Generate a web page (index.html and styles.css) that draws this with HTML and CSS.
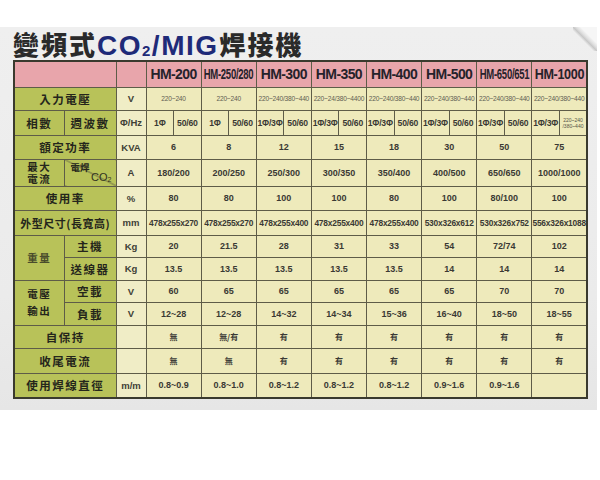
FILE: index.html
```html
<!DOCTYPE html>
<html lang="zh-Hant">
<head>
<meta charset="utf-8">
<title>變頻式CO2/MIG焊接機</title>
<link rel="stylesheet" href="styles.css">
</head>
<body>
<div class="paper">
  <h1 class="title"><span class="zh">變頻式</span><span class="en">CO<sub>2</sub>/MIG</span><span class="zh">焊接機</span></h1>
  <table class="spec">
    <colgroup>
      <col class="c-l1"><col class="c-l2"><col class="c-u">
      <col><col><col><col><col><col><col><col>
      <col><col><col><col><col><col><col><col>
    </colgroup>
    <tr class="h26">
      <th class="pink" colspan="2"></th>
      <th class="pink"></th>
      <th class="pink model" colspan="2">HM-200</th>
      <th class="pink model" colspan="2"><span class="cond">HM-250/280</span></th>
      <th class="pink model" colspan="2">HM-300</th>
      <th class="pink model" colspan="2">HM-350</th>
      <th class="pink model" colspan="2">HM-400</th>
      <th class="pink model" colspan="2">HM-500</th>
      <th class="pink model" colspan="2"><span class="cond">HM-650/651</span></th>
      <th class="pink model" colspan="2"><span class="cond2">HM-1000</span></th>
    </tr>
    <tr class="h23">
      <td class="lab" colspan="2">入力電壓</td>
      <td class="unit">V</td>
      <td class="val sm" colspan="2">220~240</td>
      <td class="val sm" colspan="2">220~240</td>
      <td class="val sm" colspan="2">220~240/380~440</td>
      <td class="val sm" colspan="2">220~24/380~4400</td>
      <td class="val sm" colspan="2">220~240/380~440</td>
      <td class="val sm" colspan="2">220~240/380~440</td>
      <td class="val sm" colspan="2">220~240/380~440</td>
      <td class="val sm" colspan="2">220~240/380~440</td>
    </tr>
    <tr class="h25">
      <td class="lab">相數</td>
      <td class="lab">週波數</td>
      <td class="unit">Φ/Hz</td>
      <td class="val ph">1Φ</td><td class="val ph">50/60</td>
      <td class="val ph">1Φ</td><td class="val ph">50/60</td>
      <td class="val ph">1Φ/3Φ</td><td class="val ph">50/60</td>
      <td class="val ph">1Φ/3Φ</td><td class="val ph">50/60</td>
      <td class="val ph">1Φ/3Φ</td><td class="val ph">50/60</td>
      <td class="val ph">1Φ/3Φ</td><td class="val ph">50/60</td>
      <td class="val ph">1Φ/3Φ</td><td class="val ph">50/60</td>
      <td class="val ph">1Φ/3Φ</td><td class="val tiny">220~240<br>/380~440</td>
    </tr>
    <tr class="h24">
      <td class="lab" colspan="2">額定功率</td>
      <td class="unit">KVA</td>
      <td class="val" colspan="2">6</td>
      <td class="val" colspan="2">8</td>
      <td class="val" colspan="2">12</td>
      <td class="val" colspan="2">15</td>
      <td class="val" colspan="2">18</td>
      <td class="val" colspan="2">30</td>
      <td class="val" colspan="2">50</td>
      <td class="val" colspan="2">75</td>
    </tr>
    <tr class="h25">
      <td class="lab two">最大<br>電流</td>
      <td class="lab diag"><div class="d-top">電焊</div><div class="d-bot">CO<sub>2</sub></div></td>
      <td class="unit">A</td>
      <td class="val" colspan="2">180/200</td>
      <td class="val" colspan="2">200/250</td>
      <td class="val" colspan="2">250/300</td>
      <td class="val" colspan="2">300/350</td>
      <td class="val" colspan="2">350/400</td>
      <td class="val" colspan="2">400/500</td>
      <td class="val" colspan="2">650/650</td>
      <td class="val" colspan="2">1000/1000</td>
    </tr>
    <tr class="h24">
      <td class="lab" colspan="2">使用率</td>
      <td class="unit">%</td>
      <td class="val" colspan="2">80</td>
      <td class="val" colspan="2">80</td>
      <td class="val" colspan="2">100</td>
      <td class="val" colspan="2">100</td>
      <td class="val" colspan="2">80</td>
      <td class="val" colspan="2">100</td>
      <td class="val" colspan="2">80/100</td>
      <td class="val" colspan="2">100</td>
    </tr>
    <tr class="h25">
      <td class="lab dimlab" colspan="2">外型尺寸(長寬高)</td>
      <td class="unit">mm</td>
      <td class="val dim" colspan="2">478x255x270</td>
      <td class="val dim" colspan="2">478x255x270</td>
      <td class="val dim" colspan="2">478x255x400</td>
      <td class="val dim" colspan="2">478x255x400</td>
      <td class="val dim" colspan="2">478x255x400</td>
      <td class="val dim" colspan="2">530x326x612</td>
      <td class="val dim" colspan="2">530x326x752</td>
      <td class="val dim" colspan="2">556x326x1088</td>
    </tr>
    <tr class="h22">
      <td class="lab soft" rowspan="2">重量</td>
      <td class="lab">主機</td>
      <td class="unit">Kg</td>
      <td class="val" colspan="2">20</td>
      <td class="val" colspan="2">21.5</td>
      <td class="val" colspan="2">28</td>
      <td class="val" colspan="2">31</td>
      <td class="val" colspan="2">33</td>
      <td class="val" colspan="2">54</td>
      <td class="val" colspan="2">72/74</td>
      <td class="val" colspan="2">102</td>
    </tr>
    <tr class="h23">
      <td class="lab">送線器</td>
      <td class="unit">Kg</td>
      <td class="val" colspan="2">13.5</td>
      <td class="val" colspan="2">13.5</td>
      <td class="val" colspan="2">13.5</td>
      <td class="val" colspan="2">13.5</td>
      <td class="val" colspan="2">13.5</td>
      <td class="val" colspan="2">14</td>
      <td class="val" colspan="2">14</td>
      <td class="val" colspan="2">14</td>
    </tr>
    <tr class="h22">
      <td class="lab two tall" rowspan="2">電壓<br>輸出</td>
      <td class="lab">空載</td>
      <td class="unit">V</td>
      <td class="val" colspan="2">60</td>
      <td class="val" colspan="2">65</td>
      <td class="val" colspan="2">65</td>
      <td class="val" colspan="2">65</td>
      <td class="val" colspan="2">65</td>
      <td class="val" colspan="2">65</td>
      <td class="val" colspan="2">70</td>
      <td class="val" colspan="2">70</td>
    </tr>
    <tr class="h23">
      <td class="lab">負載</td>
      <td class="unit">V</td>
      <td class="val" colspan="2">12~28</td>
      <td class="val" colspan="2">12~28</td>
      <td class="val" colspan="2">14~32</td>
      <td class="val" colspan="2">14~34</td>
      <td class="val" colspan="2">15~36</td>
      <td class="val" colspan="2">16~40</td>
      <td class="val" colspan="2">18~50</td>
      <td class="val" colspan="2">18~55</td>
    </tr>
    <tr class="h23">
      <td class="lab" colspan="2">自保持</td>
      <td class="unit"></td>
      <td class="val zh8" colspan="2">無</td>
      <td class="val zh8" colspan="2">無/有</td>
      <td class="val zh8" colspan="2">有</td>
      <td class="val zh8" colspan="2">有</td>
      <td class="val zh8" colspan="2">有</td>
      <td class="val zh8" colspan="2">有</td>
      <td class="val zh8" colspan="2">有</td>
      <td class="val zh8" colspan="2">有</td>
    </tr>
    <tr class="h25">
      <td class="lab" colspan="2">收尾電流</td>
      <td class="unit"></td>
      <td class="val zh8" colspan="2">無</td>
      <td class="val zh8" colspan="2">無</td>
      <td class="val zh8" colspan="2">有</td>
      <td class="val zh8" colspan="2">有</td>
      <td class="val zh8" colspan="2">有</td>
      <td class="val zh8" colspan="2">有</td>
      <td class="val zh8" colspan="2">有</td>
      <td class="val zh8" colspan="2">有</td>
    </tr>
    <tr class="h25">
      <td class="lab" colspan="2">使用焊線直徑</td>
      <td class="unit">m/m</td>
      <td class="val" colspan="2">0.8~0.9</td>
      <td class="val" colspan="2">0.8~1.0</td>
      <td class="val" colspan="2">0.8~1.2</td>
      <td class="val" colspan="2">0.8~1.2</td>
      <td class="val" colspan="2">0.8~1.2</td>
      <td class="val" colspan="2">0.9~1.6</td>
      <td class="val" colspan="2">0.9~1.6</td>
      <td class="val" colspan="2"></td>
    </tr>
  </table>
</div>
</body>
</html>
```

FILE: styles.css
```css
* { box-sizing: border-box; }
html, body { margin: 0; padding: 0; background: #ffffff; }
body {
  width: 600px;
  height: 480px;
  overflow: hidden;
  font-family: "Liberation Sans", "Noto Sans CJK TC", sans-serif;
}
.paper {
  position: relative;
  margin-top: 27px;
  width: 597px;
  height: 383px;
  padding: 2px 0 0 13px;
  background: linear-gradient(#efefef, #ebebeb 70%, #e6e6e6);
}
.paper::after {
  content: "";
  position: absolute;
  top: 0;
  right: 0;
  width: 24px;
  height: 24px;
  background: linear-gradient(to top right, rgba(0,0,0,0) 42%, #c8c8c8 50%, #dedede 56%, #f6f6f6 66%);
}
.title {
  margin: 0;
  height: 31px;
  line-height: 30px;
  font-size: 26px;
  font-weight: 900;
  white-space: nowrap;
}
.title .zh {
  font-family: "Noto Sans CJK TC", sans-serif;
  font-weight: 900;
  color: #2a2a2a;
  letter-spacing: 2px;
}
.title .en {
  font-family: "Liberation Sans", sans-serif;
  font-weight: 700;
  color: #1e2a78;
  font-size: 28px;
  letter-spacing: 1.5px;
  margin: 0 1px 0 0;
}
.title .en sub {
  font-size: 15px;
  vertical-align: -1px;
}

.spec {
  border-collapse: collapse;
  table-layout: fixed;
  width: 575px;
  border: 2px solid #3a3a2e;
}
.c-l1 { width: 50px; }
.c-l2 { width: 52px; }
.c-u { width: 30px; }
.h22 { height: 22px; }
.h23 { height: 23px; }
.h24 { height: 24px; }
.h25 { height: 25px; }
.h26 { height: 26px; }

.spec th, .spec td {
  border: 1px solid #5e5c48;
  padding: 0;
  text-align: center;
  vertical-align: middle;
  white-space: nowrap;
  overflow: visible;
}
.pink { background: #e8a5ab; }
.model {
  font-family: "Liberation Sans", sans-serif;
  font-weight: 700;
  font-size: 14px;
  letter-spacing: -0.6px;
  color: #25222a;
}
.cond, .cond2 {
  display: inline-block;
  transform: scaleX(0.68);
  letter-spacing: -0.4px;
  margin: 0 -13px;
}
.cond2 { transform: scaleX(0.9); margin: 0 -4px; }

.lab {
  background: #b8c259;
  font-family: "Noto Sans CJK TC", sans-serif;
  font-weight: 700;
  font-size: 11.5px;
  letter-spacing: 1.5px;
  color: #25261c;
  line-height: 14px;
}
.lab.dimlab { letter-spacing: 0.5px; font-size: 11px; }
.lab.two {
  font-family: "Liberation Sans", "Noto Sans CJK TC", sans-serif;
  font-size: 10.5px;
  line-height: 12px;
}
.lab.two.tall { line-height: 17px; }
.lab.soft { color: #4a4c2c; font-size: 10.5px; }
.lab.diag {
  padding: 2px 4px 1px 6px;
  vertical-align: top;
  background:
    linear-gradient(to top right, rgba(0,0,0,0) calc(50% - 0.7px), #55543f 50%, rgba(0,0,0,0) calc(50% + 0.7px)),
    #b8c259;
}
.d-top {
  text-align: left;
  font-size: 9.5px;
  line-height: 10px;
  letter-spacing: 0;
}
.d-bot {
  text-align: right;
  font-family: "Liberation Sans", sans-serif;
  font-weight: 400;
  font-size: 11px;
  line-height: 11px;
  letter-spacing: 0;
  color: #33331f;
}
.d-bot sub { font-size: 7px; vertical-align: -1px; }

.unit {
  background: #f0edc6;
  font-family: "Liberation Sans", sans-serif;
  font-weight: 700;
  font-size: 9.5px;
  color: #403f36;
}
.val {
  background: #eeeabb;
  font-family: "Liberation Sans", sans-serif;
  font-weight: 700;
  font-size: 9px;
  color: #3a3934;
}
.val.sm {
  font-weight: 400;
  font-size: 6.6px;
  letter-spacing: -0.2px;
  color: #5e5d52;
}
.val.ph { font-size: 8.6px; letter-spacing: -0.2px; }
.val.tiny {
  font-weight: 400;
  font-size: 5px;
  line-height: 6px;
  color: #555448;
}
.val.dim { font-size: 8.4px; letter-spacing: -0.2px; }
.val.zh8 {
  font-family: "Noto Sans CJK TC", sans-serif;
  font-size: 8px;
  color: #3a3934;
}
```
